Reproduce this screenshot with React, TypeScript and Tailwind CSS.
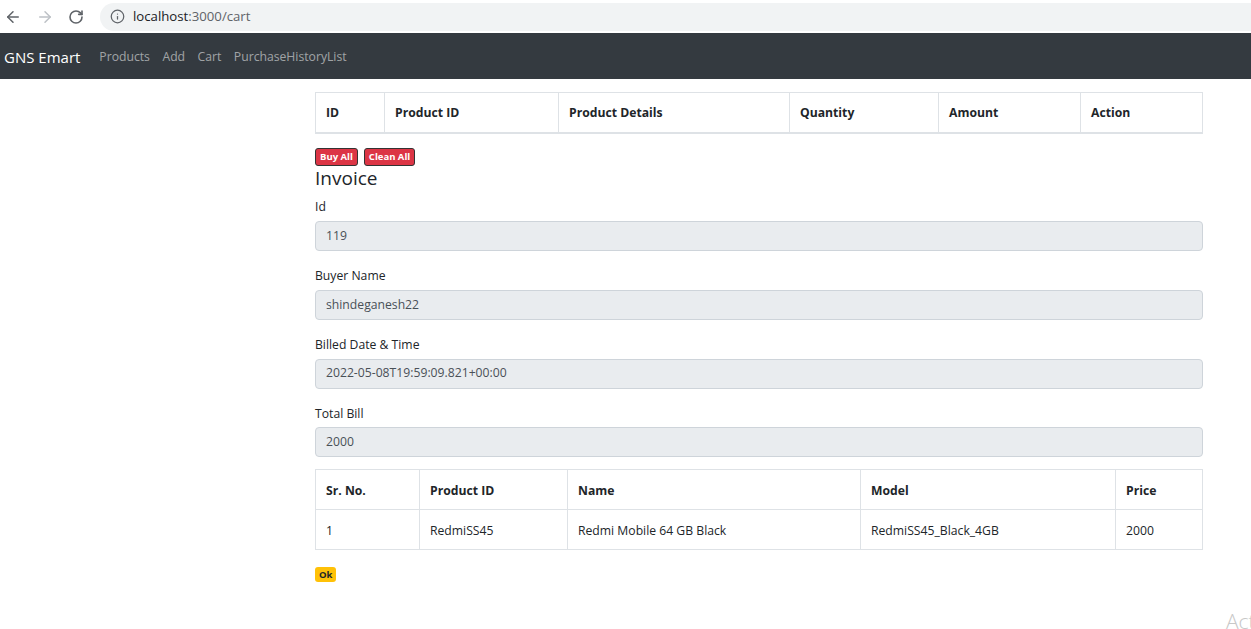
import { ArrowLeft, ArrowRight, RotateCw, Info } from "lucide-react";

// ── Cart page ────────────────────────────────────────────────────────
// Browser chrome, dark navbar, empty cart table, invoice form + items.

const font = { fontFamily: '"Segoe UI", "Open Sans", "Noto Sans", sans-serif' };

const cartHeads = [
  { label: "ID", w: "w-[69px]" },
  { label: "Product ID", w: "w-[174px]" },
  { label: "Product Details", w: "w-[231px]" },
  { label: "Quantity", w: "w-[149px]" },
  { label: "Amount", w: "w-[142px]" },
  { label: "Action", w: "" },
];

const fields = [
  { label: "Id", value: "119" },
  { label: "Buyer Name", value: "shindeganesh22" },
  { label: "Billed Date & Time", value: "2022-05-08T19:59:09.821+00:00" },
  { label: "Total Bill", value: "2000" },
];

const itemHeads = [
  { label: "Sr. No.", w: "w-[104px]" },
  { label: "Product ID", w: "w-[148px]" },
  { label: "Name", w: "w-[293px]" },
  { label: "Model", w: "w-[255px]" },
  { label: "Price", w: "" },
];

const items = [["1", "RedmiSS45", "Redmi Mobile 64 GB Black", "RedmiSS45_Black_4GB", "2000"]];

export default function App() {
  return (
    <div className="relative h-[629px] overflow-hidden bg-white text-[#212529]" style={font}>
      {/* Browser chrome */}
      <div className="flex h-[33px] items-center bg-white">
        <div className="flex w-[100px] items-center gap-[14px] pl-[4px]">
          <ArrowLeft size={18} strokeWidth={2} className="text-[#5f6368]" />
          <ArrowRight size={18} strokeWidth={2} className="text-[#bdc1c6]" />
          <RotateCw size={16} strokeWidth={2.4} className="text-[#5f6368]" />
        </div>
        <div className="flex h-[28px] flex-1 items-center gap-[8px] rounded-l-full bg-[#f1f3f4] pl-[10px]">
          <Info size={15} strokeWidth={2} className="text-[#5f6368]" />
          <span className="text-[13.2px] text-[#202124]">
            localhost<span className="text-[#5f6368]">:3000/cart</span>
          </span>
        </div>
      </div>

      {/* Navbar */}
      <nav className="flex h-[46px] items-center bg-[#343a40] px-[4px] pt-[3px]">
        <span className="mr-[19px] text-[15px] text-white">GNS Emart</span>
        <div className="flex gap-[12.5px] text-[12.2px] text-[#ffffff8c]">
          <span>Products</span>
          <span>Add</span>
          <span>Cart</span>
          <span>PurchaseHistoryList</span>
        </div>
      </nav>

      <main className="ml-[315px] w-[888px] pt-[13px] text-[12.2px] leading-[1.5]">
        {/* Cart table */}
        <table className="w-full border-collapse">
          <thead>
            <tr>
              {cartHeads.map((h) => (
                <th
                  key={h.label}
                  className={`${h.w} h-[40px] border border-b-2 border-[#dee2e6] px-[10px] pt-[2px] text-left font-bold`}
                >
                  {h.label}
                </th>
              ))}
            </tr>
          </thead>
        </table>

        <div className="mt-[14px] flex gap-[6px]">
          <button className="h-[18px] rounded-[3px] border border-[#333] bg-[#dc3545] px-[4px] text-[9.5px] font-bold leading-none text-white">
            Buy All
          </button>
          <button className="h-[18px] rounded-[3px] border border-[#333] bg-[#dc3545] px-[4px] text-[9.5px] font-bold leading-none text-white">
            Clean All
          </button>
        </div>

        <h4 className="mb-[6px] pt-[1px] text-[19px] leading-[1.2]">Invoice</h4>

        {fields.map((f, i) => (
          <div key={f.label} className={i === fields.length - 1 ? "mb-[12px]" : "mb-[13px]"}>
            <label className="mb-[4.25px] block pt-[2px] leading-[19.5px]">{f.label}</label>
            <div className="flex h-[30px] items-center rounded-[4px] border border-[#ced4da] bg-[#e9ecef] px-[10px] text-[#495057]">
              {f.value}
            </div>
          </div>
        ))}

        {/* Invoice items */}
        <table className="mb-[13px] w-full border-collapse">
          <thead>
            <tr>
              {itemHeads.map((h) => (
                <th
                  key={h.label}
                  className={`${h.w} h-[40px] border border-[#dee2e6] px-[10px] pt-[2px] text-left font-bold`}
                >
                  {h.label}
                </th>
              ))}
            </tr>
          </thead>
          <tbody>
            {items.map((row) => (
              <tr key={row[0]}>
                {row.map((c, i) => (
                  <td key={i} className="h-[40px] border border-[#dee2e6] px-[10px] pt-[2px]">
                    {c}
                  </td>
                ))}
              </tr>
            ))}
          </tbody>
        </table>

        <button className="mt-[4px] h-[15px] rounded-[3px] bg-[#ffc107] px-[4px] text-[9.5px] font-bold leading-none text-[#212529]">
          Ok
        </button>
      </main>

      {/* Windows watermark */}
      <span className="absolute left-[1226px] top-[606px] whitespace-nowrap text-[21px] font-light text-[#c8c8c8]">
        Activate Windows
      </span>
    </div>
  );
}
